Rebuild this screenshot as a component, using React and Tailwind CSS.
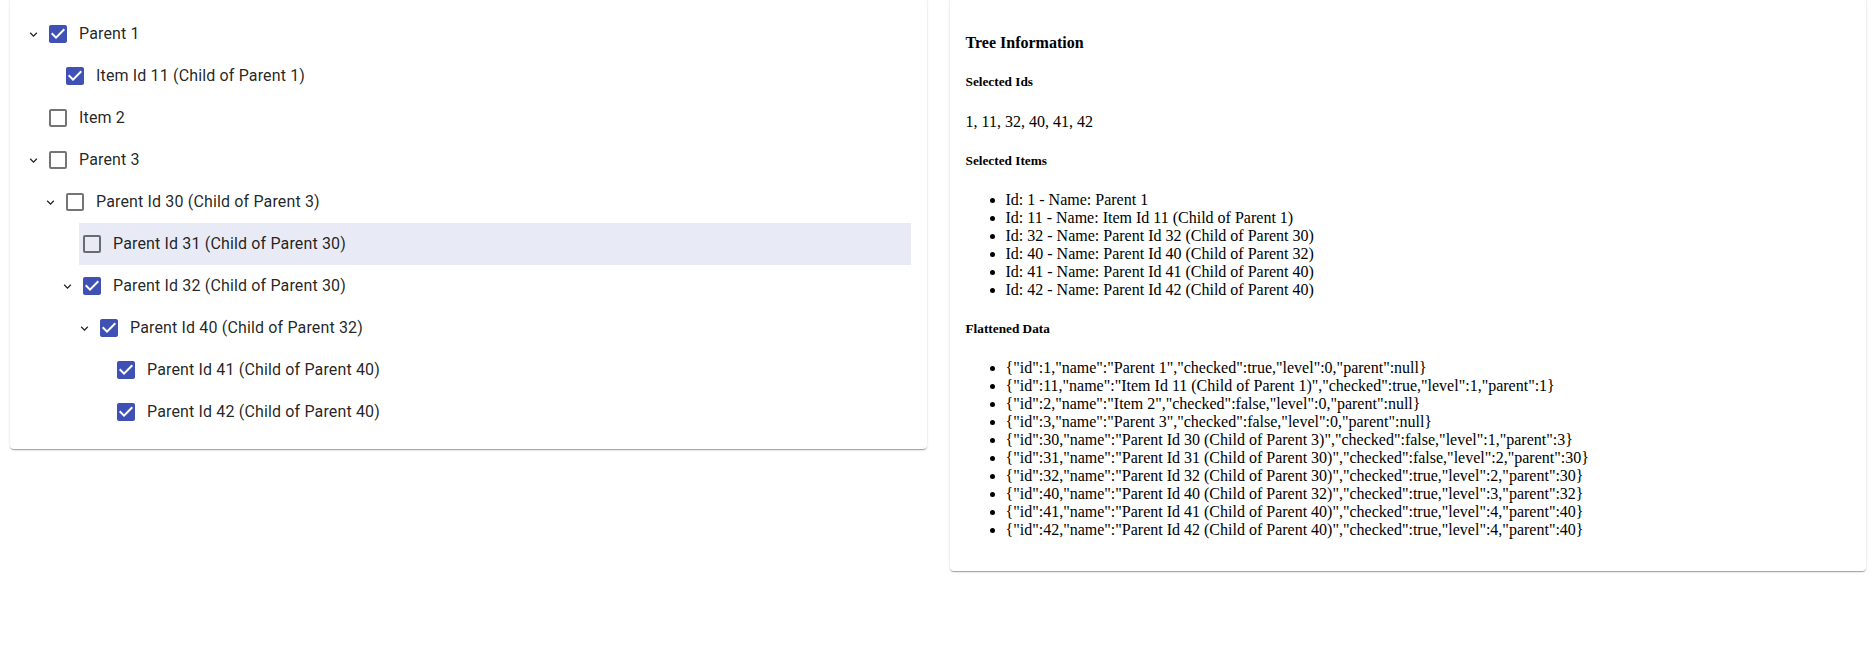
import React from 'react';

const tree = [
  { id: 1, name: 'Parent 1', checked: true, level: 0, parent: null, hasChildren: true },
  { id: 11, name: 'Item Id 11 (Child of Parent 1)', checked: true, level: 1, parent: 1 },
  { id: 2, name: 'Item 2', checked: false, level: 0, parent: null },
  { id: 3, name: 'Parent 3', checked: false, level: 0, parent: null, hasChildren: true },
  { id: 30, name: 'Parent Id 30 (Child of Parent 3)', checked: false, level: 1, parent: 3, hasChildren: true },
  { id: 31, name: 'Parent Id 31 (Child of Parent 30)', checked: false, level: 2, parent: 30, focused: true },
  { id: 32, name: 'Parent Id 32 (Child of Parent 30)', checked: true, level: 2, parent: 30, hasChildren: true },
  { id: 40, name: 'Parent Id 40 (Child of Parent 32)', checked: true, level: 3, parent: 32, hasChildren: true },
  { id: 41, name: 'Parent Id 41 (Child of Parent 40)', checked: true, level: 4, parent: 40 },
  { id: 42, name: 'Parent Id 42 (Child of Parent 40)', checked: true, level: 4, parent: 40 },
];

const indent = ['pl-0', 'pl-[17px]', 'pl-[34px]', 'pl-[51px]', 'pl-[68px]'];

const paper =
  'bg-white rounded-[4px] shadow-[0px_2px_1px_-1px_rgba(0,0,0,0.2),0px_1px_1px_0px_rgba(0,0,0,0.14),0px_1px_3px_0px_rgba(0,0,0,0.12)]';

const CheckIcon = ({ checked }) =>
  checked ? (
    <svg width="24" height="24" viewBox="0 0 24 24" className="shrink-0 fill-[#3f51b5]">
      <path d="M19 3H5c-1.11 0-2 .9-2 2v14c0 1.1.89 2 2 2h14c1.11 0 2-.9 2-2V5c0-1.1-.89-2-2-2zm-9 14l-5-5 1.41-1.41L10 14.17l7.59-7.59L19 8l-9 9z" />
    </svg>
  ) : (
    <svg width="24" height="24" viewBox="0 0 24 24" className="shrink-0 fill-[rgba(0,0,0,0.54)]">
      <path d="M19 5v14H5V5h14m0-2H5c-1.1 0-2 .9-2 2v14c0 1.1.9 2 2 2h14c1.1 0 2-.9 2-2V5c0-1.1-.9-2-2-2z" />
    </svg>
  );

const Chevron = () => (
  <svg width="15" height="15" viewBox="0 0 24 24" className="fill-[rgba(0,0,0,0.87)]">
    <path d="M16.59 8.59L12 13.17 7.41 8.59 6 10l6 6 6-6z" />
  </svg>
);

const TreeRow = ({ item }) => (
  <div className={`flex items-center ${indent[item.level]}`}>
    <div className="w-[15px] mr-[4px] flex items-center justify-center shrink-0">
      {item.hasChildren && <Chevron />}
    </div>
    <div
      className={`flex-1 flex items-center h-[42px] pl-[1px] ${item.focused ? 'bg-[#e8eaf6]' : ''}`}
    >
      <CheckIcon checked={item.checked} />
      <span className="ml-[9px] text-[16px] tracking-[0.00938em] text-[rgba(0,0,0,0.87)] font-['Roboto',sans-serif]">
        {item.name}
      </span>
    </div>
  </div>
);

const App = () => {
  const selected = tree.filter((t) => t.checked);
  const flat = tree.map(({ id, name, checked, level, parent }) =>
    JSON.stringify({ id, name, checked, level, parent })
  );

  return (
    <div className="min-h-[648px] bg-white pl-[10px] pr-[9px] -mt-[3px]">
      <div className="grid grid-cols-2 gap-[23px] items-start">
        <div className={`${paper} p-4`}>
          {tree.map((item) => (
            <TreeRow key={item.id} item={item} />
          ))}
        </div>

        <div className={`${paper} p-4 font-['Liberation_Serif','Times_New_Roman',serif] text-black`}>
          <h4 className="text-[16px] leading-[18px] font-bold my-[21.28px]">Tree Information</h4>
          <h5 className="text-[13.28px] leading-[16px] font-bold my-[22.18px]">Selected Ids</h5>
          <p className="text-[16px] leading-[18px] my-4">{selected.map((s) => s.id).join(', ')}</p>
          <h5 className="text-[13.28px] leading-[16px] font-bold my-[22.18px]">Selected Items</h5>
          <ul className="list-disc pl-10 my-4 text-[16px] leading-[18px]">
            {selected.map((s) => (
              <li key={s.id}>
                Id: {s.id} - Name: {s.name}
              </li>
            ))}
          </ul>
          <h5 className="text-[13.28px] leading-[16px] font-bold my-[22.18px]">Flattened Data</h5>
          <ul className="list-disc pl-10 my-4 text-[16px] leading-[18px]">
            {flat.map((f, i) => (
              <li key={i}>{f}</li>
            ))}
          </ul>
        </div>
      </div>
    </div>
  );
};

export default App;
